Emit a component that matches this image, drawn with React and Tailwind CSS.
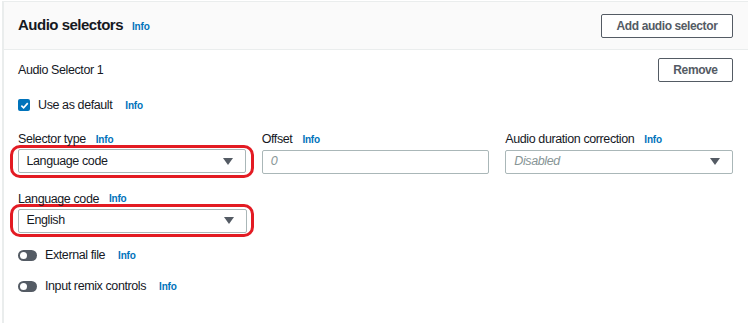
const FONT = { fontFamily: '"Liberation Sans", Arial, sans-serif' };

function Info({ className = '' }) {
  return <span className={`text-[10px] font-bold tracking-[-0.2px] text-[#0073bb] ${className}`}>Info</span>;
}

function Caret() {
  return (
    <svg width="10" height="7" viewBox="0 0 10 7" className="shrink-0">
      <path d="M0 0 L10 0 L5 7 Z" fill="#545b64" />
    </svg>
  );
}

function SelectBox({ value, placeholder }) {
  return (
    <div className="flex h-[24px] items-center justify-between rounded-[2px] border border-[#aab7b8] bg-white pl-[8px] pr-[12px] text-[12.5px]">
      {placeholder ? (
        <span className="italic text-[#879596]">{placeholder}</span>
      ) : (
        <span className="text-[#16191f]">{value}</span>
      )}
      <Caret />
    </div>
  );
}

function Highlight({ children }) {
  return (
    <div className="-mx-[8px] -my-[5px] rounded-[10px] border-[3.5px] border-[#e31b23] px-[4.5px] py-[1.5px]">
      {children}
    </div>
  );
}

function Toggle({ label }) {
  return (
    <div className="flex items-center gap-[8px] text-[12.5px] text-[#16191f]">
      <span className="flex h-[11px] w-[19px] items-center rounded-full bg-[#545b64] px-[2px]">
        <span className="h-[7px] w-[7px] rounded-full bg-white" />
      </span>
      <span>{label}</span>
      <Info className="ml-[5px]" />
    </div>
  );
}

export default function App() {
  return (
    <div style={FONT} className="h-[323px] w-[748px] overflow-hidden bg-white tracking-[-0.4px]">
      <div className="ml-[2px] mt-[1px] h-full border-l-2 border-t border-[#eaeded]">
        <div className="flex h-[48px] items-center justify-between border-b border-[#eaeded] bg-[#fafafa] pl-[14px] pr-[15px]">
          <div className="flex items-baseline gap-[9px]">
            <h2 className="text-[15px] font-bold tracking-[-0.5px] text-[#16191f]">Audio selectors</h2>
            <Info />
          </div>
          <button className="h-[24px] w-[132px] rounded-[2px] border border-[#545b64] bg-white text-[12px] font-bold text-[#545b64]">
            Add audio selector
          </button>
        </div>

        <div className="pl-[14px] pr-[15px] pt-[8px]">
          <div className="flex items-center justify-between">
            <span className="text-[12.5px] text-[#16191f]">Audio Selector 1</span>
            <button className="h-[24px] w-[75px] rounded-[2px] border border-[#545b64] bg-white text-[12px] font-bold text-[#545b64]">
              Remove
            </button>
          </div>

          <div className="mt-[14px] flex items-center gap-[8px] text-[12.5px] text-[#16191f]">
            <span className="flex h-[12px] w-[12px] items-center justify-center rounded-[2px] bg-[#0073bb]">
              <svg width="9" height="9" viewBox="0 0 10 10">
                <path d="M1.5 5.2 L4 7.6 L8.6 2.4" fill="none" stroke="white" strokeWidth="1.8" />
              </svg>
            </span>
            <span>Use as default</span>
            <Info className="ml-[5px]" />
          </div>

          <div className="mt-[15px] grid grid-cols-3 gap-x-[16px]">
            <div>
              <div className="mb-[1px] flex items-center gap-[10px] text-[12.5px] text-[#16191f]">
                Selector type <Info />
              </div>
              <Highlight>
                <SelectBox value="Language code" />
              </Highlight>
            </div>
            <div>
              <div className="mb-[1px] flex items-center gap-[10px] text-[12.5px] text-[#16191f]">
                Offset <Info />
              </div>
              <div className="flex h-[24px] items-center rounded-[2px] border border-[#aab7b8] bg-white px-[8px] text-[12.5px] italic text-[#879596]">
                0
              </div>
            </div>
            <div>
              <div className="mb-[1px] flex items-center gap-[10px] text-[12.5px] text-[#16191f]">
                Audio duration correction <Info />
              </div>
              <SelectBox placeholder="Disabled" />
            </div>
          </div>

          <div className="mt-[16px] w-[228px]">
            <div className="mb-[1px] flex items-center gap-[10px] text-[12.5px] text-[#16191f]">
              Language code <Info />
            </div>
            <Highlight>
              <SelectBox value="English" />
            </Highlight>
          </div>

          <div className="mt-[14px] flex flex-col gap-[12px]">
            <Toggle label="External file" />
            <Toggle label="Input remix controls" />
          </div>
        </div>
      </div>
    </div>
  );
}
